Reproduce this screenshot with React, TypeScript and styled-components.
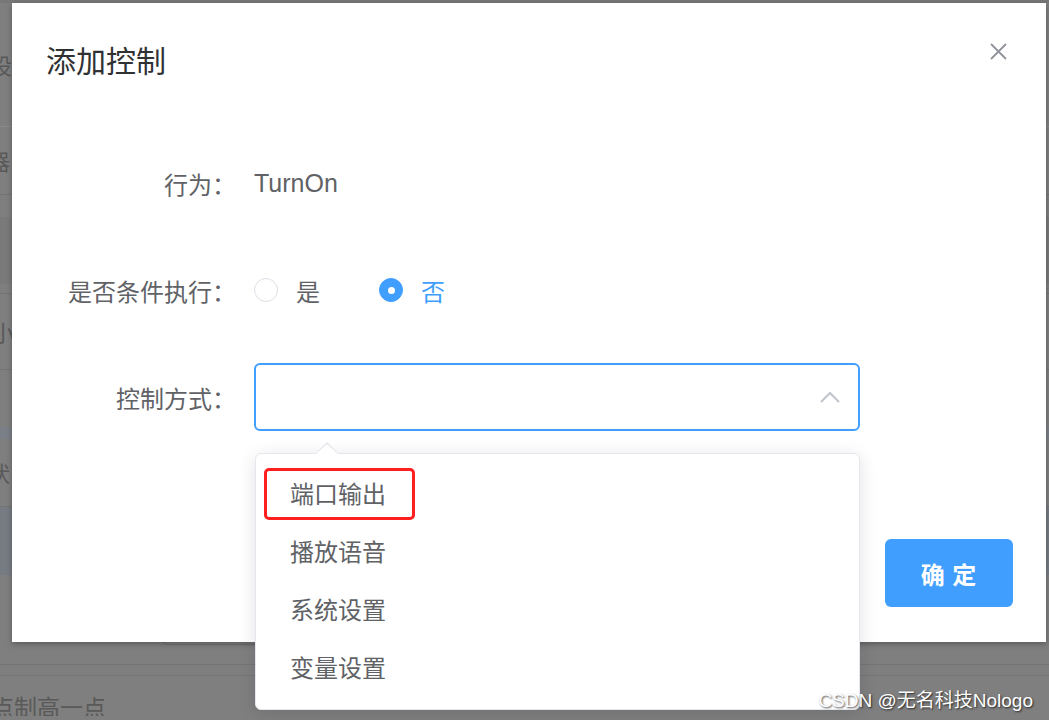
import React from "react";
import styled, { createGlobalStyle } from "styled-components";

const GlobalStyle = createGlobalStyle`
  html, body { margin: 0; padding: 0; }
  body {
    width: 1049px;
    height: 720px;
    overflow: hidden;
    background: #7f7f7f;
    font-family: "Liberation Sans", "Noto Sans CJK SC", sans-serif;
  }
  * { box-sizing: border-box; }
`;

const Screen = styled.div`
  position: relative;
  width: 1049px;
  height: 720px;
  overflow: hidden;
  background: #7f7f7f;
`;

/* ---------- dimmed page behind the dialog ---------- */
const BgPage = styled.div`
  display: flex;
  flex-direction: column;
  width: 100%;
  height: 100%;
  border-top: 3px solid #777;
`;

const BgRow = styled.div<{ $h: number; $tone?: string; $line?: string; $align?: string }>`
  flex: 0 0 ${(p) => p.$h}px;
  display: flex;
  align-items: ${(p) => p.$align || "center"};
  background: ${(p) => p.$tone || "transparent"};
  border-bottom: ${(p) => (p.$line ? `1px solid ${p.$line}` : "none")};
  overflow: hidden;
`;

const BgText = styled.span<{ $shift: number; $size?: number; $drop?: number }>`
  margin-left: ${(p) => p.$shift}px;
  margin-bottom: ${(p) => -(p.$drop || 0)}px;
  font-family: "Noto Sans CJK SC", sans-serif;
  font-size: ${(p) => p.$size || 22}px;
  line-height: 1.2;
  color: #595959;
  white-space: nowrap;
`;

const BgButtonEdge = styled.div`
  margin-left: 163px;
  align-self: flex-start;
  width: 98px;
  height: 8px;
  border: 1px solid #707070;
  border-top: none;
  border-radius: 0 0 4px 4px;
`;

/* ---------- dialog ---------- */
const Dialog = styled.div`
  position: absolute;
  left: 12px;
  top: 3px;
  width: 1034px;
  height: 639px;
  background: #fff;
  box-shadow: 0 2px 6px rgba(0, 0, 0, 0.3);
  display: flex;
  flex-direction: column;
  font-family: "Noto Sans CJK SC", sans-serif;
`;

const Header = styled.div`
  display: flex;
  justify-content: space-between;
  align-items: flex-start;
  padding: 37px 39px 0 34px;
`;

const Title = styled.div`
  font-size: 30px;
  line-height: 38px;
  color: #303133;
`;

const CloseBtn = styled.div`
  margin-top: 3px;
  width: 17px;
  height: 17px;
  display: flex;
`;

const Body = styled.div`
  padding: 71px 33px 0 30px;
  display: flex;
  flex-direction: column;
  gap: 39px;
`;

const FormRow = styled.div`
  display: flex;
  align-items: center;
  height: 68px;
`;

const Label = styled.div`
  width: 194px;
  text-align: right;
  font-size: 24px;
  color: #606266;
  white-space: nowrap;
`;

const Content = styled.div`
  margin-left: 18px;
  display: flex;
  align-items: center;
  font-size: 24px;
  color: #606266;
`;

const Value = styled.span`
  font-family: "Liberation Sans", "Noto Sans CJK SC", sans-serif;
  font-size: 25px;
  color: #606266;
`;

const RadioItem = styled.label<{ $checked?: boolean }>`
  display: flex;
  align-items: center;
  margin-right: 59px;
  color: ${(p) => (p.$checked ? "#409eff" : "#606266")};
  font-size: 24px;
`;

const RadioDot = styled.span<{ $checked?: boolean }>`
  width: 24px;
  height: 24px;
  border-radius: 50%;
  border: 1.5px solid ${(p) => (p.$checked ? "#409eff" : "#dcdfe6")};
  background: ${(p) => (p.$checked ? "#409eff" : "#fff")};
  margin-right: 18px;
  display: flex;
  align-items: center;
  justify-content: center;
  &::after {
    content: "";
    width: 7px;
    height: 7px;
    border-radius: 50%;
    background: #fff;
    display: ${(p) => (p.$checked ? "block" : "none")};
  }
`;

const SelectWrap = styled.div`
  position: relative;
  width: 606px;
  height: 68px;
`;

const SelectBox = styled.div`
  width: 100%;
  height: 100%;
  border: 2px solid #409eff;
  border-radius: 6px;
  display: flex;
  align-items: center;
  justify-content: flex-end;
  padding-right: 18px;
`;

const Dropdown = styled.ul`
  position: absolute;
  left: 1px;
  top: 90px;
  width: 605px;
  margin: 0;
  padding: 10px 0 13px;
  list-style: none;
  background: #fff;
  border: 1.5px solid #e4e7ed;
  border-radius: 6px;
  box-shadow: 0 3px 18px rgba(0, 0, 0, 0.12);
  z-index: 5;
  &::before,
  &::after {
    content: "";
    position: absolute;
    left: 60px;
    width: 0;
    height: 0;
    border-left: 11px solid transparent;
    border-right: 11px solid transparent;
  }
  &::before {
    top: -12px;
    border-bottom: 11px solid #e4e7ed;
  }
  &::after {
    top: -10px;
    border-bottom: 10px solid #fff;
  }
`;

const Option = styled.li`
  position: relative;
  height: 58px;
  line-height: 58px;
  padding: 0 34px;
  font-size: 24px;
  color: #606266;
`;

const Highlight = styled.span`
  position: absolute;
  left: 8px;
  top: 4px;
  width: 151px;
  height: 52px;
  border: 3px solid #ff1f1f;
  border-radius: 5px;
`;

const Footer = styled.div`
  display: flex;
  justify-content: flex-end;
  padding: 108px 33px 35px 0;
`;

const PrimaryButton = styled.button`
  width: 128px;
  height: 68px;
  border: none;
  border-radius: 6px;
  background: #409eff;
  color: #fff;
  font-family: "Noto Sans CJK SC", sans-serif;
  font-size: 24px;
  font-weight: 700;
  letter-spacing: 1px;
  padding: 0;
`;

const Watermark = styled.div`
  position: absolute;
  right: 16px;
  bottom: 8px;
  font-family: "Liberation Sans", "Noto Sans CJK SC", sans-serif;
  font-size: 19px;
  color: #fff;
  text-shadow: 1px 1px 2px rgba(0, 0, 0, 0.7);
  z-index: 10;
`;

const options = ["端口输出", "播放语音", "系统设置", "变量设置"];

export default function App() {
  return (
    <Screen>
      <GlobalStyle />
      <BgPage>
        <BgRow $h={124} $line="#8a8a8a">
          <BgText $shift={-10}>设</BgText>
        </BgRow>
        <BgRow $h={68} $line="#747474">
          <BgText $shift={-12}>器</BgText>
        </BgRow>
        <BgRow $h={22} />
        <BgRow $h={67} $tone="#7a7a7a" />
        <BgRow $h={10} $line="#747474" />
        <BgRow $h={76} $line="#747474">
          <BgText $shift={-8}>小E</BgText>
        </BgRow>
        <BgRow $h={57} />
        <BgRow $h={12} $tone="#7b8088" />
        <BgRow $h={68} $line="#747474">
          <BgText $shift={-12}>状</BgText>
        </BgRow>
        <BgRow $h={68} $tone="#777c83" />
        <BgRow $h={62} />
        <BgRow $h={28} $line="#747474">
          <BgButtonEdge />
        </BgRow>
        <BgRow $h={11} $line="#747474" />
        <BgRow $h={40} $align="flex-end">
          <BgText $shift={-32} $size={23} $drop={5}>一点制高一点</BgText>
        </BgRow>
      </BgPage>

      <Dialog>
        <Header>
          <Title>添加控制</Title>
          <CloseBtn>
            <svg width="17" height="17" viewBox="0 0 17 17">
              <path d="M1 1 L16 16 M16 1 L1 16" stroke="#909399" strokeWidth="1.8" />
            </svg>
          </CloseBtn>
        </Header>
        <Body>
          <FormRow>
            <Label>行为：</Label>
            <Content>
              <Value>TurnOn</Value>
            </Content>
          </FormRow>
          <FormRow>
            <Label>是否条件执行：</Label>
            <Content>
              <RadioItem>
                <RadioDot />是
              </RadioItem>
              <RadioItem $checked>
                <RadioDot $checked />否
              </RadioItem>
            </Content>
          </FormRow>
          <FormRow>
            <Label>控制方式：</Label>
            <Content>
              <SelectWrap>
                <SelectBox>
                  <svg width="20" height="12" viewBox="0 0 20 12">
                    <path d="M1 11 L10 2 L19 11" fill="none" stroke="#c0c4cc" strokeWidth="2" />
                  </svg>
                </SelectBox>
                <Dropdown>
                  {options.map((o, i) => (
                    <Option key={o}>
                      {i === 0 && <Highlight />}
                      {o}
                    </Option>
                  ))}
                </Dropdown>
              </SelectWrap>
            </Content>
          </FormRow>
        </Body>
        <Footer>
          <PrimaryButton>确 定</PrimaryButton>
        </Footer>
      </Dialog>
      <Watermark>CSDN @无名科技Nologo</Watermark>
    </Screen>
  );
}
